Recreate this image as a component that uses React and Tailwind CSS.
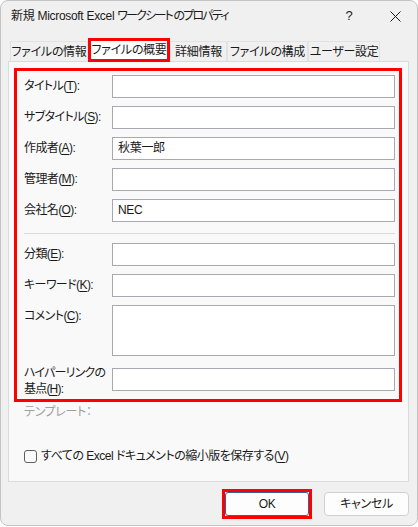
import { useState } from "react";

const FONT = "font-['Liberation_Sans','Noto_Sans_CJK_JP',sans-serif] [font-feature-settings:'palt'] tracking-[-0.3px]";

const TABS = [
  { name: "ファイルの情報", w: "w-[78px]" },
  { name: "ファイルの概要", w: "w-[82px]" },
  { name: "詳細情報", w: "w-[57px]" },
  { name: "ファイルの構成", w: "w-[81px]" },
  { name: "ユーザー設定", w: "w-[72px]" },
];

function Label({ text, hotkey }) {
  return (
    <span>
      {text}(<span className="underline underline-offset-2">{hotkey}</span>):
    </span>
  );
}

function Field({ text, hotkey, value = "", tall = false }) {
  return (
    <div className="flex items-start">
      <div className="w-[88px] shrink-0 pt-[3px] leading-[17px] whitespace-nowrap tracking-[-0.6px]">
        <Label text={text} hotkey={hotkey} />
      </div>
      <div
        className={`flex-1 bg-white border border-[#a8a8ae] px-[5px] leading-[21px] ${
          tall ? "h-[51px]" : "h-[23px]"
        }`}
      >
        {value}
      </div>
    </div>
  );
}

export default function App() {
  const [tab, setTab] = useState(1);
  const [thumbs, setThumbs] = useState(false);

  return (
    <div className={`w-[418px] h-[527px] ${FONT} text-[12px] text-[#1a1a1a]`}>
      <div className="w-[418px] h-[526px] bg-[#f0f0f0] border border-[#c4c4c4] rounded-[8px] flex flex-col overflow-hidden">
        {/* Title bar */}
        <div className="h-[30px] shrink-0 flex items-center pl-[10px]">
          <span className="flex-1 text-[12px] whitespace-nowrap">
            新規 Microsoft Excel <span className="tracking-[-1.8px]">ワークシート のプロパティ</span>
          </span>
          <span className="w-[46px] text-center text-[13px] mr-[1px]">?</span>
          <span className="w-[44px] flex justify-center">
            <svg width="11" height="11" viewBox="0 0 11 11">
              <path d="M0.5 0.5 L10.5 10.5 M10.5 0.5 L0.5 10.5" stroke="#1a1a1a" strokeWidth="1" />
            </svg>
          </span>
        </div>

        {/* Tabs */}
        <div className="h-[30px] shrink-0 flex items-end pl-[9px]">
          {TABS.map((t, i) =>
            i === tab ? (
              <div
                key={t.name}
                className={`${t.w} shrink-0 h-[24px] -mb-[1px] border-[3px] border-[#ff0000] bg-white flex items-center justify-center z-10`}
              >
                <button onClick={() => setTab(i)} className="leading-none whitespace-nowrap">
                  {t.name}
                </button>
              </div>
            ) : (
              <button
                key={t.name}
                onClick={() => setTab(i)}
                className={`${t.w} shrink-0 h-[20px] border-t border-l border-r border-[#e2e2e2] flex items-center justify-center leading-none whitespace-nowrap`}
              >
                {t.name}
              </button>
            )
          )}
        </div>

        {/* Panel */}
        <div className="ml-[7px] w-[401px] h-[421px] shrink-0 bg-[#f9f9f9] border border-[#dadada] flex flex-col pl-[5px] pr-[6px] pt-[6px]">
          <div className="border-[3px] border-[#ff0000] pl-[7px] pr-[4px] pt-[4px] pb-[8px] flex flex-col">
            <div className="flex flex-col gap-[8px]">
              <Field text="タイトル" hotkey="T" />
              <Field text="サブタイトル" hotkey="S" />
              <Field text="作成者" hotkey="A" value="秋葉一郎" />
              <Field text="管理者" hotkey="M" />
              <Field text="会社名" hotkey="O" value="NEC" />
            </div>
            <div className="h-px bg-[#dadada] mt-[11px] mb-[9px]" />
            <div className="flex flex-col gap-[8px]">
              <Field text="分類" hotkey="E" />
              <Field text="キーワード" hotkey="K" />
              <Field text="コメント" hotkey="C" tall />
              <div className="flex items-start h-[23px] mt-[4px]">
                <div className="w-[88px] shrink-0 leading-[16px] -mt-[3px] whitespace-nowrap tracking-[-0.8px]">
                  ハイパーリンクの
                  <br />
                  <Label text="基点" hotkey="H" />
                </div>
                <div className="flex-1 bg-white border border-[#a8a8ae] h-[23px]" />
              </div>
            </div>
          </div>
          <div className="pl-[10px] mt-[2px] text-[#a0a0a0] leading-[17px]">テンプレート：</div>
          <div className="flex-1" />
          <label className="pl-[10px] mb-[16px] flex items-center gap-[4px] cursor-default tracking-[-0.5px]">
            <span
              onClick={() => setThumbs(!thumbs)}
              className="w-[13px] h-[13px] border border-[#5f5f5f] rounded-[3px] bg-[#fbfbfb] flex items-center justify-center"
            >
              {thumbs && (
                <svg width="9" height="9" viewBox="0 0 9 9">
                  <path d="M1 4.5 L3.5 7 L8 1.5" fill="none" stroke="#1a1a1a" strokeWidth="1.2" />
                </svg>
              )}
            </span>
            <span>
              すべての Excel ドキュメントの縮小版を保存する(<span className="underline underline-offset-2">V</span>)
            </span>
          </label>
        </div>

        {/* Buttons */}
        <div className="flex justify-end items-start pt-[7px] pr-[8px] gap-[12px]">
          <div className="border-[3px] border-[#ff0000]">
            <button className="w-[84px] h-[24px] bg-[#fdfdfd] border border-[#3a5f92] rounded-[3px] leading-none">
              OK
            </button>
          </div>
          <button className="mt-[3px] w-[85px] h-[24px] bg-[#fdfdfd] border border-[#d0d0d0] rounded-[4px] leading-none">
            キャンセル
          </button>
        </div>
      </div>
    </div>
  );
}
